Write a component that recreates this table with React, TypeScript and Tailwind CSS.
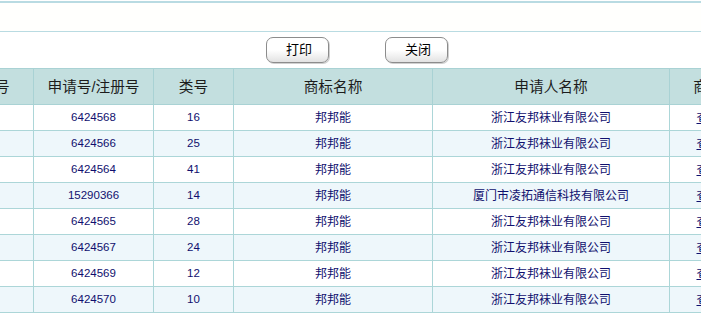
const rows = [
  { id: "1", no: "6424568", cls: "16", mark: "邦邦能", owner: "浙江友邦袜业有限公司" },
  { id: "2", no: "6424566", cls: "25", mark: "邦邦能", owner: "浙江友邦袜业有限公司" },
  { id: "3", no: "6424564", cls: "41", mark: "邦邦能", owner: "浙江友邦袜业有限公司" },
  { id: "4", no: "15290366", cls: "14", mark: "邦邦能", owner: "厦门市凌拓通信科技有限公司" },
  { id: "5", no: "6424565", cls: "28", mark: "邦邦能", owner: "浙江友邦袜业有限公司" },
  { id: "6", no: "6424567", cls: "24", mark: "邦邦能", owner: "浙江友邦袜业有限公司" },
  { id: "7", no: "6424569", cls: "12", mark: "邦邦能", owner: "浙江友邦袜业有限公司" },
  { id: "8", no: "6424570", cls: "10", mark: "邦邦能", owner: "浙江友邦袜业有限公司" },
];

const font = "font-['Liberation_Sans','Noto_Sans_CJK_SC',sans-serif]";

function Btn({ label }: { label: string }) {
  return (
    <button className="h-[26px] w-[63px] rounded-[7px] border border-[#8c8c8c] bg-gradient-to-b from-white via-white to-[#e2e2e2] pl-[3px] text-[13px] text-black shadow-[1px_1px_0_#d0d0d0]">
      {label}
    </button>
  );
}

export default function App() {
  return (
    <div className={`w-[701px] h-[317px] overflow-hidden bg-white ${font}`}>
      <div className="mt-[1px] h-[31px] border-t-2 border-b border-[#b9dbe2] bg-[#fffffd]" />

      <div className="flex h-[36px] items-start pt-[5px] pl-[266px] gap-[56px]">
        <Btn label="打印" />
        <Btn label="关闭" />
      </div>

      <table className="ml-[-44px] w-[819px] min-w-[819px] table-fixed border-collapse">
        <colgroup>
          <col className="w-[77px]" />
          <col className="w-[120px]" />
          <col className="w-[80px]" />
          <col className="w-[199px]" />
          <col className="w-[237px]" />
          <col className="w-[106px]" />
        </colgroup>
        <thead>
          <tr className="h-[36px] bg-[#c3dfdf] text-[14.67px] text-[#1c1c1c]">
            {["序号", "申请号/注册号", "类号", "商标名称", "申请人名称", "商标详情"].map((h) => (
              <th key={h} className="border border-[#a9d2d4] font-normal text-center whitespace-nowrap">
                {h}
              </th>
            ))}
          </tr>
        </thead>
        <tbody className="text-[12px] text-[#10106e]">
          {rows.map((r, i) => (
            <tr key={r.id} className={`h-[26px] ${i % 2 === 0 ? "bg-white" : "bg-[#eef7fb]"}`}>
              <td className="border border-[#acd6d8] text-center">{r.id}</td>
              <td className="border border-[#acd6d8] text-center text-[11.5px]">{r.no}</td>
              <td className="border border-[#acd6d8] text-center text-[11.5px]">{r.cls}</td>
              <td className="border border-[#acd6d8] text-center">{r.mark}</td>
              <td className="border border-[#acd6d8] text-center">{r.owner}</td>
              <td className="border border-[#acd6d8] text-center text-[13px] whitespace-nowrap underline">查看详情</td>
            </tr>
          ))}
        </tbody>
      </table>
    </div>
  );
}
